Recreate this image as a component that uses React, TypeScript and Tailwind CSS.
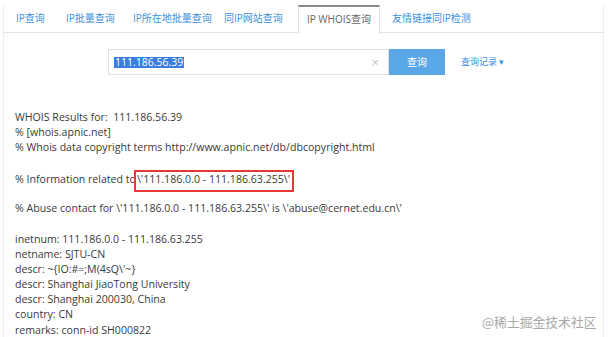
const tabs = ['IP查询', 'IP批量查询', 'IP所在地批量查询', '同IP网站查询', 'IP WHOIS查询', '友情链接同IP检测'];

const lines: (string | null)[] = [
  'WHOIS Results for:  111.186.56.39',
  '% [whois.apnic.net]',
  '% Whois data copyright terms http://www.apnic.net/db/dbcopyright.html',
  '',
  null,
  '',
  "% Abuse contact for \\'111.186.0.0 - 111.186.63.255\\' is \\'abuse@cernet.edu.cn\\'",
  '',
  'inetnum: 111.186.0.0 - 111.186.63.255',
  'netname: SJTU-CN',
  "descr: ~{IO:#=;M(4sQ\\'~}",
  'descr: Shanghai JiaoTong University',
  'descr: Shanghai 200030, China',
  'country: CN',
  'remarks: conn-id SH000822',
];

export default function App() {
  return (
    <div className="w-[609px] h-[337px] bg-white overflow-hidden font-['Open_Sans','Noto_Sans_CJK_SC',sans-serif]">
      <div className="ml-[3px] mr-[5px] mt-[5px] h-[340px] border-l border-r border-[#ececec]">
        {/* tabs */}
        <div className="flex h-[28px] border-b border-[#e4e4e4] text-[10px] text-[#3d8fdc]">
          <div className="w-[50px] pl-[12px] leading-[26px]">{tabs[0]}</div>
          <div className="w-[67px] pl-[12px] leading-[26px]">{tabs[1]}</div>
          <div className="w-[91px] pl-[12px] leading-[26px]">{tabs[2]}</div>
          <div className="w-[86px] pl-[12px] leading-[26px]">{tabs[3]}</div>
          <div className="w-[82px] -mb-px h-[29px] border-t-2 border-l border-r border-t-[#8a8a8a] border-[#e4e4e4] bg-white text-center leading-[24px] text-[#666]">
            {tabs[4]}
          </div>
          <div className="pl-[12px] leading-[26px]">{tabs[5]}</div>
        </div>

        {/* search */}
        <div className="flex items-center mt-[16px] ml-[104px]">
          <div className="flex items-center w-[281px] h-[26px] border border-[#e2e2e2] px-[5px]">
            <span className="bg-[#3c7de0] text-white text-[10.5px] leading-[11px] px-px">111.186.56.39</span>
            <span className="ml-auto mr-[4px] text-[#c4c4c4] text-[13px] leading-none">×</span>
          </div>
          <button className="w-[56px] h-[26px] bg-[#5aa7e8] text-white text-[10px]">查询</button>
          <span className="ml-[16px] text-[9px] text-[#3d8fdc]">查询记录 ▾</span>
        </div>

        {/* results */}
        <div className="mt-[35px] pl-[11px] text-[10.6px] leading-[15.2px] text-[#3a3a3a]">
          {lines.map((l, i) =>
            l === null ? (
              <div key={i} className="flex h-[15.2px] pt-[1px]">
                <span>% Information related to</span>
                <span className="relative ml-[1px]">
                  <span className="absolute -left-[3px] -top-[2px] -right-[4px] -bottom-[6px] border-2 border-[#e53935]"></span>
                  \'111.186.0.0 - 111.186.63.255\'
                </span>
              </div>
            ) : (
              <div key={i} className="h-[15.2px] whitespace-pre">{l}</div>
            )
          )}
        </div>
      </div>
      <div className="absolute left-[482px] top-[312px] text-[12.8px] text-[#a8a8a8] font-['Noto_Sans_CJK_SC',sans-serif]">
        @稀土掘金技术社区
      </div>
    </div>
  );
}
